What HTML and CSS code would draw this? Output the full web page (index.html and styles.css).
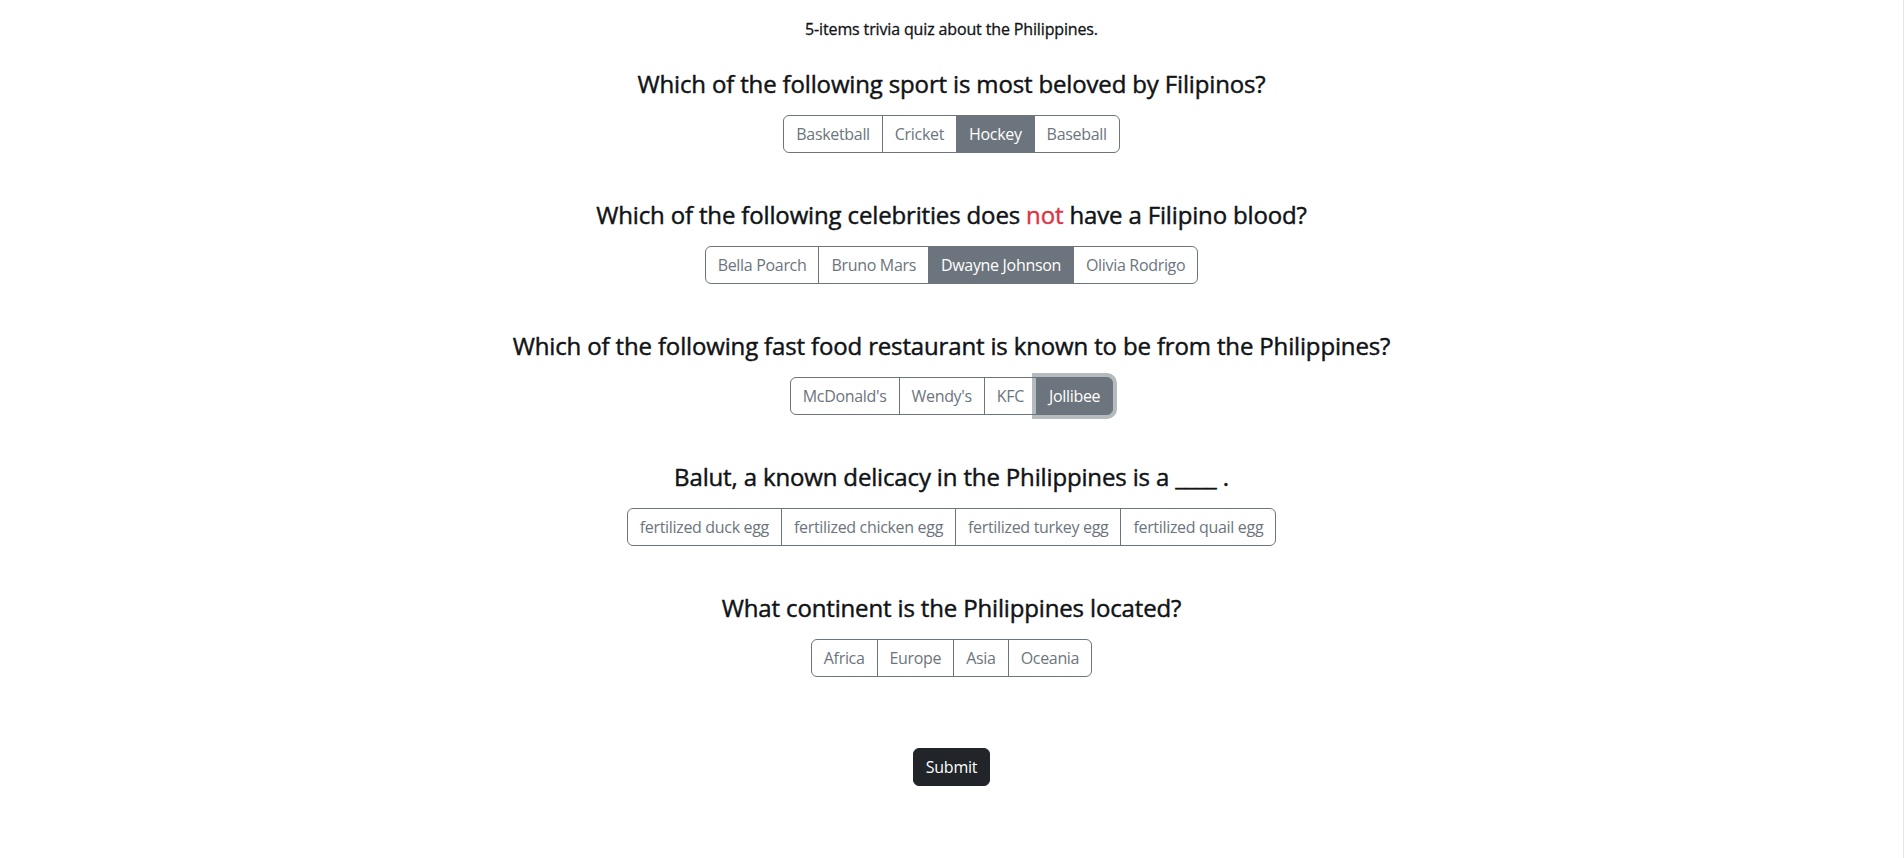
FILE: index.html
```html
<!DOCTYPE html>
<html lang="en">
<head>
<meta charset="utf-8">
<title>Philippines Trivia Quiz</title>
<link rel="stylesheet" href="styles.css">
</head>
<body>
<main class="quiz">
  <p class="intro">5-items trivia quiz about the Philippines.</p>

  <section class="question">
    <h4 class="q-title">Which of the following sport is most beloved by Filipinos?</h4>
    <div class="btn-group">
      <button class="opt">Basketball</button>
      <button class="opt">Cricket</button>
      <button class="opt active">Hockey</button>
      <button class="opt">Baseball</button>
    </div>
  </section>

  <section class="question">
    <h4 class="q-title">Which of the following celebrities does <span class="danger">not</span> have a Filipino blood?</h4>
    <div class="btn-group">
      <button class="opt">Bella Poarch</button>
      <button class="opt">Bruno Mars</button>
      <button class="opt active">Dwayne Johnson</button>
      <button class="opt">Olivia Rodrigo</button>
    </div>
  </section>

  <section class="question">
    <h4 class="q-title">Which of the following fast food restaurant is known to be from the Philippines?</h4>
    <div class="btn-group">
      <button class="opt">McDonald's</button>
      <button class="opt">Wendy's</button>
      <button class="opt">KFC</button>
      <button class="opt active focus">Jollibee</button>
    </div>
  </section>

  <section class="question">
    <h4 class="q-title">Balut, a known delicacy in the Philippines is a ____ .</h4>
    <div class="btn-group">
      <button class="opt">fertilized duck egg</button>
      <button class="opt">fertilized chicken egg</button>
      <button class="opt">fertilized turkey egg</button>
      <button class="opt">fertilized quail egg</button>
    </div>
  </section>

  <section class="question">
    <h4 class="q-title">What continent is the Philippines located?</h4>
    <div class="btn-group">
      <button class="opt">Africa</button>
      <button class="opt">Europe</button>
      <button class="opt">Asia</button>
      <button class="opt">Oceania</button>
    </div>
  </section>

  <div class="actions">
    <button class="submit">Submit</button>
  </div>
</main>
</body>
</html>
```
FILE: styles.css
```css
*, *::before, *::after { box-sizing: border-box; }

html, body { margin: 0; padding: 0; background: #fff; }

body {
  font-family: "Open Sans", "Noto Sans", sans-serif;
  font-size: 16px;
  line-height: 1.5;
  color: #212529;
  min-height: 100vh;
  border-right: 1px solid #e6e6e6;
}

.quiz {
  display: flex;
  flex-direction: column;
  align-items: center;
  padding-top: 17px;
  text-align: center;
}

.intro {
  margin: 0 0 28px;
  font-size: 16px;
  font-weight: 400;
  letter-spacing: -0.14px;
  line-height: 24px;
  color: #111316;
  -webkit-text-stroke: 0.3px #111316;
}

.question {
  display: flex;
  flex-direction: column;
  align-items: center;
  gap: 17px;
  margin-bottom: 47px;
}

.q-title {
  margin: 0;
  font-size: 24px;
  font-weight: 400;
  line-height: 29px;
  letter-spacing: -0.15px;
  color: #111316;
  -webkit-text-stroke: 0.45px #111316;
}

.danger {
  color: #dc3545;
  -webkit-text-stroke-color: #dc3545;
}

.btn-group {
  display: inline-flex;
}

.opt {
  font-family: inherit;
  font-size: 16px;
  line-height: 24px;
  letter-spacing: -0.32px;
  padding: 6px 12px;
  color: #6c757d;
  background: transparent;
  border: 1px solid #6c757d;
  border-radius: 0;
  margin-left: -1px;
  position: relative;
  cursor: pointer;
}

.opt:first-child {
  margin-left: 0;
  border-top-left-radius: 6px;
  border-bottom-left-radius: 6px;
}

.opt:last-child {
  border-top-right-radius: 6px;
  border-bottom-right-radius: 6px;
}

.opt.active {
  color: #fff;
  background: #6c757d;
  z-index: 1;
}

.opt.focus {
  box-shadow: 0 0 0 4px rgba(108, 117, 125, 0.5);
  z-index: 2;
}

.actions {
  margin-top: 24px;
}

.submit {
  font-family: inherit;
  font-size: 16px;
  line-height: 24px;
  letter-spacing: -0.2px;
  padding: 6px 12px;
  color: #fff;
  background: #212529;
  border: 1px solid #212529;
  border-radius: 6px;
  cursor: pointer;
}
```
